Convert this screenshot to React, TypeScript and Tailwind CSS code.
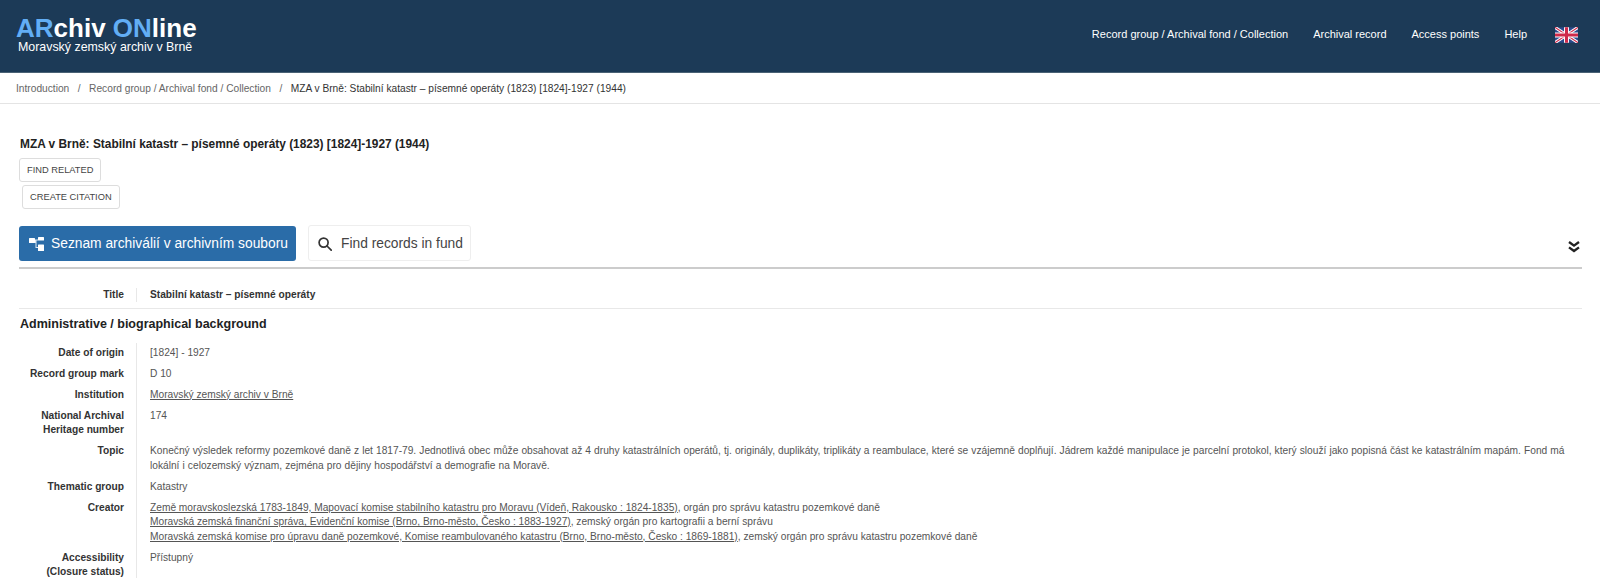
import type { ReactNode } from "react";

const navItems = ["Record group / Archival fond / Collection", "Archival record", "Access points", "Help"];

function UkFlag() {
  return (
    <svg width="23" height="16" viewBox="0 0 60 40" className="ml-[3px]" aria-hidden="true">
      <rect width="60" height="40" fill="#2b4a8c" />
      <path d="M0 0L60 40M60 0L0 40" stroke="#fff" strokeWidth="8" />
      <path d="M0 0L60 40M60 0L0 40" stroke="#cf2a4a" strokeWidth="3" />
      <path d="M30 0V40M0 20H60" stroke="#fff" strokeWidth="13" />
      <path d="M30 0V40M0 20H60" stroke="#cf2a4a" strokeWidth="8" />
    </svg>
  );
}

function TreeIcon() {
  return (
    <svg width="15" height="14" viewBox="0 0 15 14" fill="#fff" aria-hidden="true">
      <rect x="0" y="1" width="6" height="5" rx="0.5" />
      <rect x="9" y="0" width="6" height="3.5" rx="0.5" />
      <rect x="9" y="7.5" width="6" height="6.5" rx="0.5" />
      <path d="M6 2.5h3v1H7.5V10H9v1H6.5V6H6z" opacity="0.85" />
    </svg>
  );
}

function SearchIcon() {
  return (
    <svg width="14" height="14" viewBox="0 0 14 14" fill="none" stroke="#333" strokeWidth="1.7" aria-hidden="true">
      <circle cx="5.6" cy="5.6" r="4.5" />
      <path d="M9 9l4.2 4.2" strokeLinecap="round" />
    </svg>
  );
}

function ChevronsDown() {
  return (
    <svg width="12" height="12" viewBox="0 0 12 12" fill="none" stroke="#222" strokeWidth="2.4" aria-hidden="true">
      <path d="M1 1l5 3.6L11 1" />
      <path d="M1 6.4l5 3.6 5-3.6" />
    </svg>
  );
}

function Row({ label, children }: { label: ReactNode; children: ReactNode }) {
  return (
    <div className="flex">
      <div className="w-[105px] shrink-0 py-[3.25px] text-right font-bold text-[#333]">{label}</div>
      <div className="ml-[12px] flex-1 border-l border-[#e8e8e8] py-[3.25px] pl-[13px] text-[#555]">{children}</div>
    </div>
  );
}

function Ext({ href, rest }: { href: string; rest: string }) {
  return (
    <div>
      <a className="underline">{href}</a>
      {rest}
    </div>
  );
}

export default function App() {
  return (
    <div className="h-[578px] overflow-hidden bg-white font-['Liberation_Sans',Arial,sans-serif] text-[10.2px] leading-[14.5px] text-[#333]">
      {/* Header */}
      <header className="flex h-[73px] items-center justify-between border-b border-[#4a6275] bg-[#1c3a57] pl-4 pr-[22px]">
        <div className="-mt-[3px]">
          <div className="text-[26px] leading-[26px] font-bold text-white">
            <span className="text-[#62aef5]">AR</span>chiv <span className="text-[#62aef5]">ON</span>line
          </div>
          <div className="ml-[2px] text-[12.4px] leading-[13px] text-white">Moravský zemský archiv v Brně</div>
        </div>
        <nav className="flex items-center gap-[25px] pb-[3px] text-[11px] text-white">
          {navItems.map((item) => (
            <a key={item}>{item}</a>
          ))}
          <UkFlag />
        </nav>
      </header>

      {/* Breadcrumb */}
      <div className="flex h-[31px] items-center border-b border-[#e4e4e4] pt-[2px] pl-4 text-[10.2px] text-[#666]">
        <span>Introduction</span>
        <span className="mx-[8.5px]">/</span>
        <span>Record group / Archival fond / Collection</span>
        <span className="mx-[8.5px]">/</span>
        <span className="text-[#333]">MZA v Brně: Stabilní katastr – písemné operáty (1823) [1824]-1927 (1944)</span>
      </div>

      <main className="pr-[18px] pl-[19px]">
        <h1 className="mt-[32px] ml-[1px] text-[11.9px] leading-[16px] font-bold text-[#222]">
          MZA v Brně: Stabilní katastr – písemné operáty (1823) [1824]-1927 (1944)
        </h1>
        <div className="mt-[6px]">
          <button className="block h-[24px] rounded-[3px] border border-[#ddd] px-[7px] text-[9.3px] text-[#444]">
            FIND RELATED
          </button>
          <button className="mt-[3px] ml-[3px] block h-[24px] rounded-[3px] border border-[#ddd] px-[7px] text-[9.3px] text-[#444]">
            CREATE CITATION
          </button>
        </div>

        <div className="mt-[16px] flex items-center border-b-2 border-[#ccc] pb-[6px]">
          <button className="flex h-[35px] w-[277px] items-center gap-[7px] rounded-[3px] bg-[#2a6ca8] pt-[2px] pl-[10px] text-[13.8px] whitespace-nowrap text-white">
            <TreeIcon />
            Seznam archiválií v archivním souboru
          </button>
          <button className="ml-[12px] flex h-[36px] w-[163px] items-center gap-[9px] rounded-[3px] border border-[#eee] pt-[2px] pl-[9px] text-[13.8px] whitespace-nowrap text-[#444]">
            <SearchIcon />
            Find records in fund
          </button>
          <div className="mt-[7px] mr-[2px] ml-auto">
            <ChevronsDown />
          </div>
        </div>

        <div className="mt-[18.5px] flex border-b border-[#e8e8e8] pb-[6px]">
          <div className="w-[105px] shrink-0 text-right font-bold">Title</div>
          <div className="ml-[12px] border-l border-[#e8e8e8] pl-[13px] font-bold">
            Stabilní katastr – písemné operáty
          </div>
        </div>

        <h2 className="mt-[7px] mb-[9.5px] ml-[1px] text-[12.5px] leading-[17px] font-bold text-[#222]">
          Administrative / biographical background
        </h2>

        <Row label="Date of origin">[1824] - 1927</Row>
        <Row label="Record group mark">D 10</Row>
        <Row label="Institution">
          <a className="underline">Moravský zemský archiv v Brně</a>
        </Row>
        <Row label={<>National Archival<br />Heritage number</>}>174</Row>
        <Row label="Topic">
          <span className="[word-spacing:0.25px]">
            Konečný výsledek reformy pozemkové daně z let 1817-79. Jednotlivá obec může obsahovat až 4 druhy katastrálních
            operátů, tj. originály, duplikáty, triplikáty a reambulace, které se vzájemně doplňují. Jádrem každé manipulace je
            parcelní protokol, který slouží jako popisná část ke katastrálním mapám. Fond má lokální i celozemský význam,
            zejména pro dějiny hospodářství a demografie na Moravě.
          </span>
        </Row>
        <Row label="Thematic group">Katastry</Row>
        <Row label="Creator">
          <Ext
            href="Země moravskoslezská 1783-1849, Mapovací komise stabilního katastru pro Moravu (Vídeň, Rakousko : 1824-1835)"
            rest=", orgán pro správu katastru pozemkové daně"
          />
          <Ext
            href="Moravská zemská finanční správa, Evidenční komise (Brno, Brno-město, Česko : 1883-1927)"
            rest=", zemský orgán pro kartografii a berní správu"
          />
          <Ext
            href="Moravská zemská komise pro úpravu daně pozemkové, Komise reambulovaného katastru (Brno, Brno-město, Česko : 1869-1881)"
            rest=", zemský orgán pro správu katastru pozemkové daně"
          />
        </Row>
        <Row label={<>Accessibility<br />(Closure status)</>}>Přístupný</Row>
      </main>
    </div>
  );
}
